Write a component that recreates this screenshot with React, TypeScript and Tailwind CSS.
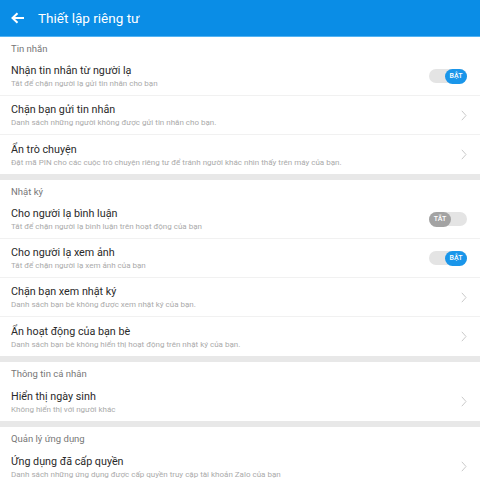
import React from 'react';

type Row = {
  title: string;
  desc: string;
  toggle?: 'on' | 'off';
};

type Section = {
  label: string;
  rows: Row[];
};

const sections: Section[] = [
  {
    label: 'Tin nhắn',
    rows: [
      { title: 'Nhận tin nhắn từ người lạ', desc: 'Tắt để chặn người lạ gửi tin nhắn cho bạn', toggle: 'on' },
      { title: 'Chặn bạn gửi tin nhắn', desc: 'Danh sách những người không được gửi tin nhắn cho bạn.' },
      { title: 'Ẩn trò chuyện', desc: 'Đặt mã PIN cho các cuộc trò chuyện riêng tư để tránh người khác nhìn thấy trên máy của bạn.' },
    ],
  },
  {
    label: 'Nhật ký',
    rows: [
      { title: 'Cho người lạ bình luận', desc: 'Tắt để chặn người lạ bình luận trên hoạt động của bạn', toggle: 'off' },
      { title: 'Cho người lạ xem ảnh', desc: 'Tắt để chặn người lạ xem ảnh của bạn', toggle: 'on' },
      { title: 'Chặn bạn xem nhật ký', desc: 'Danh sách bạn bè không được xem nhật ký của bạn.' },
      { title: 'Ẩn hoạt động của bạn bè', desc: 'Danh sách bạn bè không hiển thị hoạt động trên nhật ký của bạn.' },
    ],
  },
  {
    label: 'Thông tin cá nhân',
    rows: [{ title: 'Hiển thị ngày sinh', desc: 'Không hiển thị với người khác' }],
  },
  {
    label: 'Quản lý ứng dụng',
    rows: [{ title: 'Ứng dụng đã cấp quyền', desc: 'Danh sách những ứng dụng được cấp quyền truy cập tài khoản Zalo của bạn' }],
  },
];

function Toggle({ on }: { on: boolean }) {
  return (
    <div className={`flex h-[14px] w-[38px] items-center rounded-full bg-[#e4e4e4] ${on ? 'justify-end' : 'justify-start'}`}>
      <div
        className={`flex h-[15px] w-[22px] items-center justify-center rounded-full text-[7px] font-medium leading-none text-white ${
          on ? 'bg-[#1a96ea]' : 'bg-[#a3a3a3]'
        }`}
      >
        {on ? 'BẬT' : 'TẮT'}
      </div>
    </div>
  );
}

function Chevron() {
  return (
    <svg width="6" height="11" viewBox="0 0 6 11" fill="none" className="shrink-0">
      <path d="M0.8 0.8 L5 5.5 L0.8 10.2" stroke="#c9c9c9" strokeWidth="1" />
    </svg>
  );
}

function SettingRow({ row, last }: { row: Row; last: boolean }) {
  return (
    <div className={`flex h-[39px] items-center pl-[11px] pr-[13px] ${last ? '' : 'border-b border-[#f1f1f1]'}`}>
      <div className="flex min-w-0 flex-1 flex-col">
        <span className="text-[10.75px] leading-[15px] text-[#2a2a2a]">{row.title}</span>
        <span className="mt-[1px] truncate text-[8px] leading-[10px] text-[#aaa]">{row.desc}</span>
      </div>
      {row.toggle ? <Toggle on={row.toggle === 'on'} /> : <Chevron />}
    </div>
  );
}

export default function App() {
  return (
    <div className="h-[480px] w-[480px] overflow-hidden bg-white" style={{ fontFamily: 'Roboto, "Noto Sans", sans-serif' }}>
      <div className="flex h-[37px] items-center border-b border-[#52b3f3] bg-[#0a8de6] pl-[11px]">
        <svg width="14" height="12" viewBox="0 0 14 12" fill="none">
          <path d="M13 6 H1.8 M6.5 1.2 L1.5 6 L6.5 10.8" stroke="white" strokeWidth="2" />
        </svg>
        <span className="ml-[13px] text-[13.5px] text-white">Thiết lập riêng tư</span>
      </div>
      {sections.map((section, i) => (
        <div key={section.label}>
          {i > 0 && <div className="h-[6px] bg-[#e8e8e8]" />}
          <div className="flex h-[20px] items-end pb-[2px] pl-[11px] text-[9.5px] leading-[12px] text-[#777]">
            {section.label}
          </div>
          {section.rows.map((row, j) => (
            <SettingRow key={row.title} row={row} last={j === section.rows.length - 1} />
          ))}
        </div>
      ))}
    </div>
  );
}
